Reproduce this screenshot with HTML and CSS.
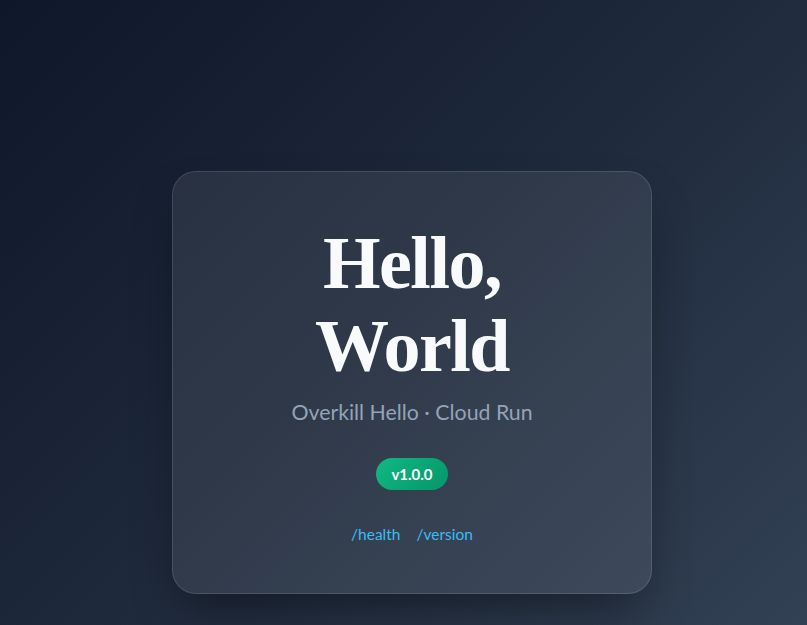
FILE: index.html
```html
<!DOCTYPE html>
<html lang="en">
<head>
<meta charset="utf-8">
<title>Overkill Hello</title>
<link rel="stylesheet" href="styles.css">
</head>
<body>
<main class="page">
  <section class="card">
    <h1 class="title">Hello,<br>World</h1>
    <p class="subtitle">Overkill Hello · Cloud Run</p>
    <span class="badge">v1.0.0</span>
    <nav class="links">
      <a href="#health">/health</a>
      <a href="#version">/version</a>
    </nav>
  </section>
</main>
</body>
</html>
```
FILE: styles.css
```css
html, body {
  margin: 0;
  padding: 0;
}
body {
  min-height: 100vh;
  background: linear-gradient(135deg, #0f172a 0%, #1e293b 50%, #334155 100%);
  font-family: "Lato", "Noto Sans", sans-serif;
}
.page {
  min-height: 100vh;
  box-sizing: border-box;
  display: flex;
  justify-content: center;
  align-items: flex-start;
  padding: 171px 0 0 17px;
}
.card {
  width: 480px;
  box-sizing: border-box;
  padding: 50px 40px 47px;
  border-radius: 24px;
  background: rgba(255, 255, 255, 0.08);
  border: 1px solid rgba(255, 255, 255, 0.12);
  box-shadow: 0 25px 50px -12px rgba(0, 0, 0, 0.45);
  display: flex;
  flex-direction: column;
  align-items: center;
  text-align: center;
}
.title {
  margin: 0;
  font-family: "Liberation Serif", "DejaVu Serif", serif;
  font-weight: 700;
  font-size: 74px;
  line-height: 83px;
  letter-spacing: -1.5px;
  color: #f8fafc;
}
.subtitle {
  margin: 9px 0 0;
  font-size: 21.3px;
  line-height: 31px;
  color: #94a3b8;
}
.badge {
  margin-top: 30px;
  display: inline-flex;
  align-items: center;
  justify-content: center;
  height: 32px;
  padding: 0 15px;
  border-radius: 16px;
  background: linear-gradient(135deg, #10b981, #059669);
  color: #ffffff;
  font-weight: 700;
  font-size: 15px;
}
.links {
  margin-top: 32px;
  display: flex;
  gap: 16px;
  font-size: 15.5px;
  line-height: 24px;
}
.links a {
  color: #38bdf8;
  text-decoration: none;
}
```
